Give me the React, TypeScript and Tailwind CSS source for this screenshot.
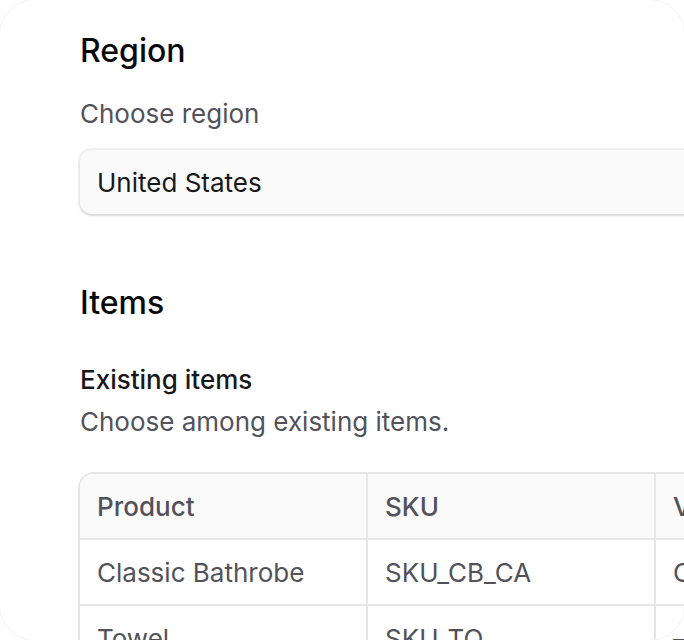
import React from "react";

const rows = [
  { product: "Classic Bathrobe", sku: "SKU_CB_CA", variant: "Classic Bathrobe" },
  { product: "Towel", sku: "SKU_TO", variant: "—" },
];

export default function App() {
  return (
    <div className="relative w-[684px] h-[640px] overflow-hidden bg-white font-['Inter',_'Noto_Sans',_sans-serif]">
      <div className="pl-[80px] pt-[27px]">
        <h2 className="text-[32px] leading-[48px] font-medium text-[#09090b]">Region</h2>
        <div className="mt-[19px] text-[26px] leading-[40px] text-[#52525b]">Choose region</div>
        <div className="mt-[16px] h-[64px] w-[700px] rounded-[12px] bg-[#fafafa] shadow-[0_0_0_2px_rgba(0,0,0,0.06),0_2px_3px_rgba(0,0,0,0.10)] flex items-center px-[17px] text-[26px] text-[#18181b]">
          United States
        </div>

        <h2 className="mt-[65px] text-[32px] leading-[48px] font-medium text-[#09090b]">Items</h2>
        <div className="mt-[33px] text-[26px] leading-[40px] font-medium text-[#18181b]">Existing items</div>
        <div className="mt-[2px] text-[26px] leading-[40px] text-[#52525b]">Choose among existing items.</div>

        <div className="-ml-[2px] mt-[30px] w-[900px] rounded-tl-[16px] border-l-2 border-t-2 border-[#e6e6e6] overflow-hidden">
          <div className="grid grid-cols-[288px_288px_288px] bg-[#fafafa] border-b-2 border-[#e6e6e6]">
            <div className="h-[64px] flex items-center px-[17px] border-r-2 border-[#e6e6e6] text-[26px] font-medium text-[#52525b]">Product</div>
            <div className="h-[64px] flex items-center px-[17px] border-r-2 border-[#e6e6e6] text-[26px] font-medium text-[#52525b]">SKU</div>
            <div className="h-[64px] flex items-center px-[17px] border-r-2 border-[#e6e6e6] text-[26px] font-medium text-[#52525b]">Variant</div>
          </div>
          {rows.map((r) => (
            <div key={r.sku} className="grid grid-cols-[288px_288px_288px] bg-white border-b-2 border-[#e6e6e6]">
              <div className="h-[64px] flex items-center px-[17px] border-r-2 border-[#e6e6e6] text-[26px] text-[#52525b]">{r.product}</div>
              <div className="h-[64px] flex items-center px-[17px] border-r-2 border-[#e6e6e6] text-[26px] text-[#52525b]">{r.sku}</div>
              <div className="h-[64px] flex items-center px-[17px] border-r-2 border-[#e6e6e6] text-[26px] text-[#52525b]">{r.variant}</div>
            </div>
          ))}
        </div>
      </div>
      <div className="pointer-events-none absolute -left-[1px] -top-[1px] w-[686px] h-[642px] rounded-[36px] border border-[#f3f3f3]" />
    </div>
  );
}
